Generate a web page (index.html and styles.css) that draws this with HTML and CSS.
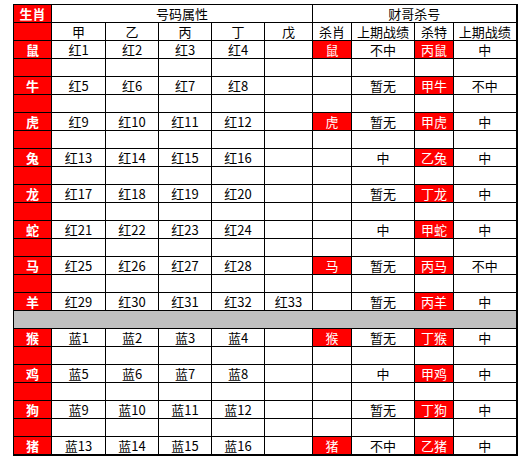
FILE: index.html
```html
<!DOCTYPE html>
<html>
<head>
<meta charset="utf-8">
<link rel="stylesheet" href="styles.css">
</head>
<body>
<table class="grid">
<colgroup>
<col class="c-sx"><col class="c-a"><col class="c-b"><col class="c-b"><col class="c-b"><col class="c-e"><col class="c-k"><col class="c-r"><col class="c-k"><col class="c-r2">
</colgroup>
<tr><td class="zod">生肖</td><td colspan="5">号码属性</td><td colspan="4">财哥杀号</td></tr>
<tr><td class="zod"></td><td>甲</td><td>乙</td><td>丙</td><td>丁</td><td>戊</td><td>杀肖</td><td>上期战绩</td><td>杀特</td><td>上期战绩</td></tr>
<tr><td class="zod">鼠</td><td>红1</td><td>红2</td><td>红3</td><td>红4</td><td></td><td class="hit">鼠</td><td>不中</td><td class="hit">丙鼠</td><td>中</td></tr>
<tr><td class="zod"></td><td></td><td></td><td></td><td></td><td></td><td></td><td></td><td></td><td></td></tr>
<tr><td class="zod">牛</td><td>红5</td><td>红6</td><td>红7</td><td>红8</td><td></td><td></td><td>暂无</td><td class="hit">甲牛</td><td>不中</td></tr>
<tr><td class="zod"></td><td></td><td></td><td></td><td></td><td></td><td></td><td></td><td></td><td></td></tr>
<tr><td class="zod">虎</td><td>红9</td><td>红10</td><td>红11</td><td>红12</td><td></td><td class="hit">虎</td><td>暂无</td><td class="hit">甲虎</td><td>中</td></tr>
<tr><td class="zod"></td><td></td><td></td><td></td><td></td><td></td><td></td><td></td><td></td><td></td></tr>
<tr><td class="zod">兔</td><td>红13</td><td>红14</td><td>红15</td><td>红16</td><td></td><td></td><td>中</td><td class="hit">乙兔</td><td>中</td></tr>
<tr><td class="zod"></td><td></td><td></td><td></td><td></td><td></td><td></td><td></td><td></td><td></td></tr>
<tr><td class="zod">龙</td><td>红17</td><td>红18</td><td>红19</td><td>红20</td><td></td><td></td><td>暂无</td><td class="hit">丁龙</td><td>中</td></tr>
<tr><td class="zod"></td><td></td><td></td><td></td><td></td><td></td><td></td><td></td><td></td><td></td></tr>
<tr><td class="zod">蛇</td><td>红21</td><td>红22</td><td>红23</td><td>红24</td><td></td><td></td><td>中</td><td class="hit">甲蛇</td><td>中</td></tr>
<tr><td class="zod"></td><td></td><td></td><td></td><td></td><td></td><td></td><td></td><td></td><td></td></tr>
<tr><td class="zod">马</td><td>红25</td><td>红26</td><td>红27</td><td>红28</td><td></td><td class="hit">马</td><td>暂无</td><td class="hit">丙马</td><td>不中</td></tr>
<tr><td class="zod"></td><td></td><td></td><td></td><td></td><td></td><td></td><td></td><td></td><td></td></tr>
<tr><td class="zod">羊</td><td>红29</td><td>红30</td><td>红31</td><td>红32</td><td>红33</td><td></td><td>暂无</td><td class="hit">丙羊</td><td>中</td></tr>
<tr><td class="sep" colspan="10"></td></tr>
<tr><td class="zod">猴</td><td>蓝1</td><td>蓝2</td><td>蓝3</td><td>蓝4</td><td></td><td class="hit">猴</td><td>暂无</td><td class="hit">丁猴</td><td>中</td></tr>
<tr><td class="zod"></td><td></td><td></td><td></td><td></td><td></td><td></td><td></td><td></td><td></td></tr>
<tr><td class="zod">鸡</td><td>蓝5</td><td>蓝6</td><td>蓝7</td><td>蓝8</td><td></td><td></td><td>中</td><td class="hit">甲鸡</td><td>中</td></tr>
<tr><td class="zod"></td><td></td><td></td><td></td><td></td><td></td><td></td><td></td><td></td><td></td></tr>
<tr><td class="zod">狗</td><td>蓝9</td><td>蓝10</td><td>蓝11</td><td>蓝12</td><td></td><td></td><td>暂无</td><td class="hit">丁狗</td><td>中</td></tr>
<tr><td class="zod"></td><td></td><td></td><td></td><td></td><td></td><td></td><td></td><td></td><td></td></tr>
<tr><td class="zod">猪</td><td>蓝13</td><td>蓝14</td><td>蓝15</td><td>蓝16</td><td></td><td class="hit">猪</td><td>不中</td><td class="hit">乙猪</td><td>中</td></tr>
</table>
</body>
</html>
```
FILE: styles.css
```css
html, body {
  margin: 0;
  padding: 0;
  background: #ffffff;
}
body {
  padding: 4px 0 0 13px;
  font-family: "Noto Sans CJK SC", "Noto Sans", sans-serif;
  font-size: 13px;
  color: #000000;
}
.grid {
  border-collapse: collapse;
  table-layout: fixed;
  width: 504px;
  border-right: 2px solid #000;
  border-bottom: 2px solid #000;
}
.c-sx { width: 38px; }
.c-a { width: 54px; }
.c-b { width: 53px; }
.c-e { width: 48px; }
.c-k { width: 39px; }
.c-r { width: 63px; }
.c-r2 { width: 63px; }
.grid tr { height: 18px; }
.grid td {
  border: 1px solid #000;
  padding: 0;
  height: 17px;
  line-height: 16px;
  text-align: center;
  vertical-align: middle;
  white-space: nowrap;
  overflow: hidden;
}
.grid td.zod {
  background: #ff0000;
  color: #ffffff;
  font-weight: bold;
}
.grid td.hit {
  background: #ff0000;
  color: #ffffff;
}
.grid td.sep {
  background: #c0c0c0;
}
```
